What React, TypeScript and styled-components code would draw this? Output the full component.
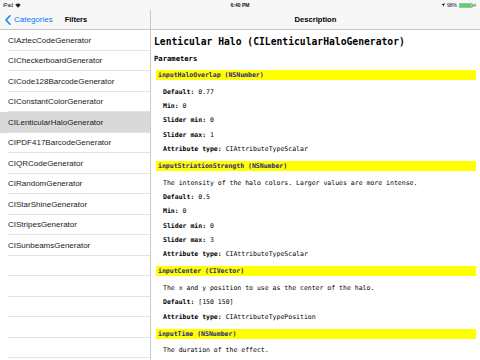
import React from "react";
import styled, { createGlobalStyle } from "styled-components";

const filters = [
  "CIAztecCodeGenerator",
  "CICheckerboardGenerator",
  "CICode128BarcodeGenerator",
  "CIConstantColorGenerator",
  "CILenticularHaloGenerator",
  "CIPDF417BarcodeGenerator",
  "CIQRCodeGenerator",
  "CIRandomGenerator",
  "CIStarShineGenerator",
  "CIStripesGenerator",
  "CISunbeamsGenerator",
  "",
  "",
  "",
  "",
  "",
];

type Line = { label?: string; value: string };
type Param = { name: string; type: string; lines: Line[] };

const params: Param[] = [
  {
    name: "inputHaloOverlap",
    type: "NSNumber",
    lines: [
      { label: "Default:", value: "0.77" },
      { label: "Min:", value: "0" },
      { label: "Slider min:", value: "0" },
      { label: "Slider max:", value: "1" },
      { label: "Attribute type:", value: "CIAttributeTypeScalar" },
    ],
  },
  {
    name: "inputStriationStrength",
    type: "NSNumber",
    lines: [
      { value: "The intensity of the halo colors. Larger values are more intense." },
      { label: "Default:", value: "0.5" },
      { label: "Min:", value: "0" },
      { label: "Slider min:", value: "0" },
      { label: "Slider max:", value: "3" },
      { label: "Attribute type:", value: "CIAttributeTypeScalar" },
    ],
  },
  {
    name: "inputCenter",
    type: "CIVector",
    lines: [
      { value: "The x and y position to use as the center of the halo." },
      { label: "Default:", value: "[150 150]" },
      { label: "Attribute type:", value: "CIAttributeTypePosition" },
    ],
  },
  {
    name: "inputTime",
    type: "NSNumber",
    lines: [{ value: "The duration of the effect." }],
  },
];

const GlobalStyle = createGlobalStyle`
  html, body {
    margin: 0;
    padding: 0;
    width: 480px;
    height: 360px;
    overflow: hidden;
    background: #fff;
  }
`;

const Screen = styled.div`
  width: 480px;
  height: 360px;
  display: grid;
  grid-template-columns: 150px 1fr;
  grid-template-rows: 10px 20px 1fr;
  font-family: "Liberation Sans", Arial, sans-serif;
  overflow: hidden;
`;

const StatusBar = styled.div`
  grid-column: 1 / 3;
  background: #f7f7f7;
  display: flex;
  align-items: center;
  justify-content: space-between;
  padding: 0 4px 0 3px;
  font-size: 5px;
  color: #111;
  position: relative;
`;

const StatusSide = styled.div`
  display: flex;
  align-items: center;
  gap: 2px;
`;

const Clock = styled.div`
  position: absolute;
  left: 0;
  right: 0;
  text-align: center;
  font-weight: bold;
  pointer-events: none;
`;

const NavBar = styled.div<{ $divider?: boolean }>`
  background: #f7f7f7;
  border-bottom: 1px solid #c8c8cc;
  border-left: ${(p) => (p.$divider ? "1px solid #c8c8cc" : "none")};
  display: flex;
  align-items: center;
  justify-content: ${(p) => (p.$divider ? "center" : "flex-start")};
  box-sizing: border-box;
  font-size: 8px;
  color: #000;
`;

const BackButton = styled.div`
  display: flex;
  align-items: center;
  gap: 3px;
  color: #007aff;
  padding-left: 5px;
`;

const NavTitle = styled.div`
  font-weight: bold;
  font-size: 7.5px;
  margin-left: 12px;
`;

const CenterTitle = styled.div`
  font-weight: bold;
  font-size: 7.6px;
`;

const List = styled.div`
  overflow: hidden;
`;

const Row = styled.div<{ $selected?: boolean }>`
  height: 20.5px;
  box-sizing: border-box;
  display: flex;
  align-items: center;
  padding-left: 8px;
  font-size: 8px;
  color: #1a1a1a;
  background: ${(p) => (p.$selected ? "#d9d9d9" : "#fff")};
  position: relative;

  &::after {
    content: "";
    position: absolute;
    left: 8px;
    right: 0;
    bottom: 0;
    height: 1px;
    background: #e2e2e4;
  }
`;

const Detail = styled.div`
  border-left: 1px solid #c8c8cc;
  overflow: hidden;
  padding: 5px 4px 0 3px;
  font-family: "DejaVu Sans Mono", "Liberation Mono", monospace;
  color: #000;
`;

const Heading = styled.div`
  font-size: 9.7px;
  font-weight: bold;
  line-height: 14px;
`;

const SubHeading = styled.div`
  font-size: 7.2px;
  font-weight: bold;
  margin-top: 4px;
  line-height: 12px;
`;

const ParamBar = styled.div`
  background: #ffff00;
  height: 10px;
  margin: 5px 0 4.5px 2px;
  padding-left: 2px;
  display: flex;
  align-items: center;
  font-size: 6.5px;
  font-weight: bold;
  color: #25258f;
`;

const ParamLine = styled.div`
  height: 14.3px;
  display: flex;
  align-items: center;
  padding-left: 9px;
  font-size: 6.5px;
  white-space: pre;
`;

const Label = styled.b`
  font-weight: bold;
`;

const Chevron = () => (
  <svg width="6" height="10" viewBox="0 0 6 10">
    <polyline points="5,0.8 1,5 5,9.2" fill="none" stroke="#007aff" strokeWidth="1.4" strokeLinecap="round" strokeLinejoin="round" />
  </svg>
);

const Wifi = () => (
  <svg width="6" height="5" viewBox="0 0 12 10">
    <path d="M6 9.5 L0.5 3.5 A8 8 0 0 1 11.5 3.5 Z" fill="#222" />
  </svg>
);

const Battery = () => (
  <svg width="17" height="5" viewBox="0 0 34 10">
    <rect x="0.5" y="0.5" width="26" height="9" rx="2" fill="none" stroke="#444" />
    <rect x="2" y="2" width="23" height="6" fill="#4cd964" />
    <rect x="27.5" y="3" width="1.5" height="4" fill="#444" />
    <path d="M32 1 L30.5 5.5 L32 5.5 L31 9 L33.5 4 L32 4 L33 1 Z" fill="#222" />
  </svg>
);

const Arrow = () => (
  <svg width="4" height="4" viewBox="0 0 8 8">
    <path d="M8 0 L0 3.5 L4 4 L4.5 8 Z" fill="#222" />
  </svg>
);

export default function App() {
  return (
    <>
      <GlobalStyle />
      <Screen>
        <StatusBar>
          <StatusSide>
            <span>iPad</span>
            <Wifi />
          </StatusSide>
          <Clock>6:40 PM</Clock>
          <StatusSide>
            <Arrow />
            <span>98%</span>
            <Battery />
          </StatusSide>
        </StatusBar>
        <NavBar>
          <BackButton>
            <Chevron />
            <span>Categories</span>
          </BackButton>
          <NavTitle>Filters</NavTitle>
        </NavBar>
        <NavBar $divider>
          <CenterTitle>Description</CenterTitle>
        </NavBar>
        <List>
          {filters.map((f, i) => (
            <Row key={i} $selected={f === "CILenticularHaloGenerator"}>
              {f}
            </Row>
          ))}
        </List>
        <Detail>
          <Heading>Lenticular Halo (CILenticularHaloGenerator)</Heading>
          <SubHeading>Parameters</SubHeading>
          {params.map((p) => (
            <React.Fragment key={p.name}>
              <ParamBar>
                {p.name} ({p.type})
              </ParamBar>
              {p.lines.map((l, i) => (
                <ParamLine key={i}>
                  {l.label && <Label>{l.label} </Label>}
                  {l.value}
                </ParamLine>
              ))}
            </React.Fragment>
          ))}
        </Detail>
      </Screen>
    </>
  );
}
